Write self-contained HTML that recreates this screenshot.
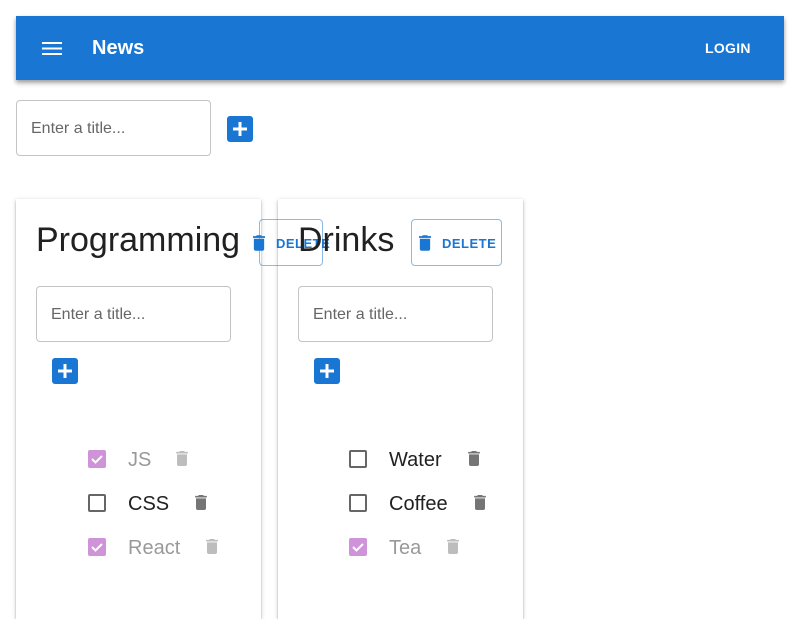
<!DOCTYPE html>
<html><head><style>
*{box-sizing:border-box}
body{margin:0;width:800px;height:600px;overflow:hidden;background:#fff;font-family:"Liberation Sans",Arial,sans-serif;position:relative}
.abs{position:absolute}
.bar{left:16px;top:16px;width:768px;height:64px;background:#1976d2;box-shadow:0 2px 4px rgba(0,0,0,.3),0 4px 5px rgba(0,0,0,.14)}
.input{border:1px solid #c4c4c4;border-radius:4px;height:56px;width:195px;font-size:16px;color:#666;padding:19px 0 0 14px}
.plus{width:26px;height:26px;background:#1976d2;border-radius:3px}
.card{top:199px;width:245px;height:420px;background:#fff;box-shadow:0 2px 3px -1px rgba(0,0,0,.25),0 1px 2px rgba(0,0,0,.16),0 1px 5px rgba(0,0,0,.14)}
.title{font-size:34px;color:#212121;top:221px}
.del{border:1px solid rgba(25,118,210,.5);border-radius:4px;height:47px;top:219px}
.dt{color:#1976d2;font-size:13px;font-weight:bold;letter-spacing:.5px;top:236px}
.cb{width:18px;height:18px;border:2px solid #666;border-radius:2px}
.cb.on{background:#ce93d8;border:none}
.txt{font-size:20px}
</style></head><body>
<div class="abs bar"></div>
<svg class="abs" style="left:42px;top:42px" width="20" height="13" viewBox="0 0 20 13"><path d="M0 1h20M0 6.5h20M0 12h20" stroke="#fff" stroke-width="2"/></svg>
<div class="abs" style="left:92px;top:37px;color:#fff;font-size:20px;font-weight:bold">News</div>
<div class="abs" style="left:705px;top:40px;color:#fff;font-size:14px;font-weight:bold;letter-spacing:.3px">LOGIN</div>

<div class="abs input" style="left:16px;top:100px">Enter a title...</div>
<svg class="abs plus" style="left:227px;top:116px" viewBox="0 0 26 26"><path d="M13 6v14M6 13h14" stroke="#fff" stroke-width="3"/></svg>

<div class="abs card" style="left:16px"></div>
<div class="abs card" style="left:278px"></div>

<div class="abs del" style="left:259px;width:64px"></div>
<svg class="abs" style="left:253px;top:235px" width="12" height="16" viewBox="5 3 14 18"><path d="M6 19c0 1.1.9 2 2 2h8c1.1 0 2-.9 2-2V7H6v12zM19 4h-3.5l-1-1h-5l-1 1H5v2h14V4z" fill="#1976d2"/></svg>
<div class="abs dt" style="left:276px">DELETE</div>
<div class="abs title" style="left:36px">Programming</div>
<div class="abs title" style="left:298px">Drinks</div>
<div class="abs del" style="left:411px;width:91px"></div>
<svg class="abs" style="left:419px;top:235px" width="12" height="16" viewBox="5 3 14 18"><path d="M6 19c0 1.1.9 2 2 2h8c1.1 0 2-.9 2-2V7H6v12zM19 4h-3.5l-1-1h-5l-1 1H5v2h14V4z" fill="#1976d2"/></svg>
<div class="abs dt" style="left:442px">DELETE</div>

<div class="abs input" style="left:36px;top:286px">Enter a title...</div>
<svg class="abs plus" style="left:52px;top:358px" viewBox="0 0 26 26"><path d="M13 6v14M6 13h14" stroke="#fff" stroke-width="3"/></svg>
<div class="abs input" style="left:298px;top:286px">Enter a title...</div>
<svg class="abs plus" style="left:314px;top:358px" viewBox="0 0 26 26"><path d="M13 6v14M6 13h14" stroke="#fff" stroke-width="3"/></svg>

<svg class="abs cb on" style="left:88px;top:450px" viewBox="0 0 18 18"><path d="M4 9l3.5 3.5L14 6" stroke="#fff" stroke-width="2" fill="none"/></svg>
<div class="abs txt" style="left:128px;top:449px;color:#999">JS</div>
<svg class="abs" style="left:176px;top:451px" width="12" height="15" viewBox="5 3 14 18"><path d="M6 19c0 1.1.9 2 2 2h8c1.1 0 2-.9 2-2V7H6v12zM19 4h-3.5l-1-1h-5l-1 1H5v2h14V4z" fill="#bdbdbd"/></svg>
<div class="abs cb" style="left:88px;top:494px"></div>
<div class="abs txt" style="left:128px;top:493px;color:#212121">CSS</div>
<svg class="abs" style="left:195px;top:495px" width="12" height="15" viewBox="5 3 14 18"><path d="M6 19c0 1.1.9 2 2 2h8c1.1 0 2-.9 2-2V7H6v12zM19 4h-3.5l-1-1h-5l-1 1H5v2h14V4z" fill="#757575"/></svg>
<svg class="abs cb on" style="left:88px;top:538px" viewBox="0 0 18 18"><path d="M4 9l3.5 3.5L14 6" stroke="#fff" stroke-width="2" fill="none"/></svg>
<div class="abs txt" style="left:128px;top:537px;color:#999">React</div>
<svg class="abs" style="left:206px;top:539px" width="12" height="15" viewBox="5 3 14 18"><path d="M6 19c0 1.1.9 2 2 2h8c1.1 0 2-.9 2-2V7H6v12zM19 4h-3.5l-1-1h-5l-1 1H5v2h14V4z" fill="#bdbdbd"/></svg>

<div class="abs cb" style="left:349px;top:450px"></div>
<div class="abs txt" style="left:389px;top:449px;color:#212121">Water</div>
<svg class="abs" style="left:468px;top:451px" width="12" height="15" viewBox="5 3 14 18"><path d="M6 19c0 1.1.9 2 2 2h8c1.1 0 2-.9 2-2V7H6v12zM19 4h-3.5l-1-1h-5l-1 1H5v2h14V4z" fill="#757575"/></svg>
<div class="abs cb" style="left:349px;top:494px"></div>
<div class="abs txt" style="left:389px;top:493px;color:#212121">Coffee</div>
<svg class="abs" style="left:474px;top:495px" width="12" height="15" viewBox="5 3 14 18"><path d="M6 19c0 1.1.9 2 2 2h8c1.1 0 2-.9 2-2V7H6v12zM19 4h-3.5l-1-1h-5l-1 1H5v2h14V4z" fill="#757575"/></svg>
<svg class="abs cb on" style="left:349px;top:538px" viewBox="0 0 18 18"><path d="M4 9l3.5 3.5L14 6" stroke="#fff" stroke-width="2" fill="none"/></svg>
<div class="abs txt" style="left:389px;top:537px;color:#999">Tea</div>
<svg class="abs" style="left:447px;top:539px" width="12" height="15" viewBox="5 3 14 18"><path d="M6 19c0 1.1.9 2 2 2h8c1.1 0 2-.9 2-2V7H6v12zM19 4h-3.5l-1-1h-5l-1 1H5v2h14V4z" fill="#bdbdbd"/></svg>
</body></html>
